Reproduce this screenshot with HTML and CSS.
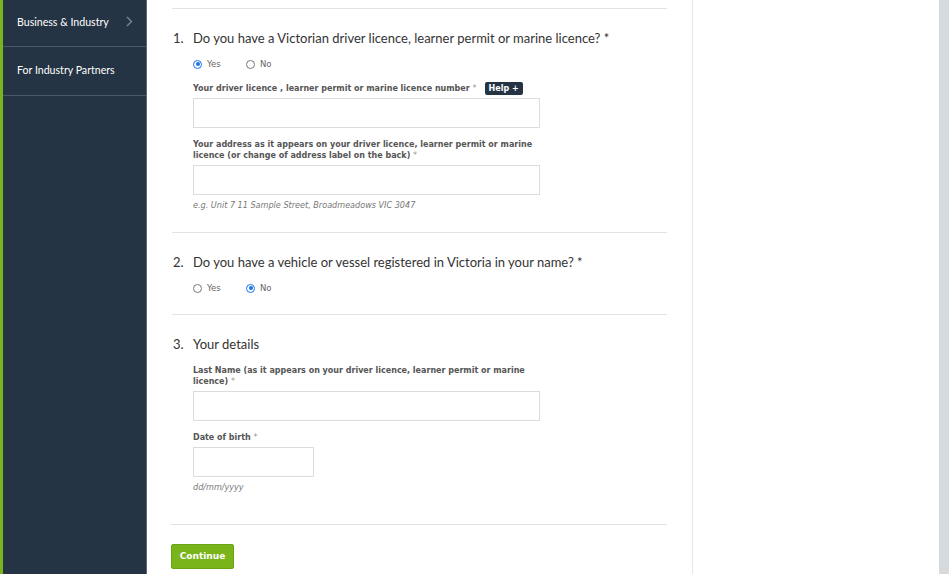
FILE: index.html
```html
<!DOCTYPE html>
<html>
<head>
<meta charset="utf-8">
<link rel="stylesheet" href="styles.css">
</head>
<body>
<div class="page">
  <div class="accent"></div>
  <nav class="sidebar">
    <a class="nav-item">Business &amp; Industry
      <svg class="chev" width="7" height="11" viewBox="0 0 7 11"><path d="M1 1l4.5 4.5L1 10" fill="none" stroke="#7d8895" stroke-width="1.3"/></svg>
    </a>
    <a class="nav-item">For Industry Partners</a>
  </nav>
  <main class="main">
    <div class="section first">
      <h2 class="q"><span class="num">1.</span>Do you have a Victorian driver licence, learner permit or marine licence? *</h2>
      <div class="body">
        <div class="radios">
          <label class="radio"><span class="dot on"></span>Yes</label>
          <label class="radio"><span class="dot"></span>No</label>
        </div>
        <div class="field">
          <div class="label">Your driver licence , learner permit or marine licence number <span class="req">*</span><span class="help">Help +</span></div>
          <div class="input wide"></div>
        </div>
        <div class="field">
          <div class="label">Your address as it appears on your driver licence, learner permit or marine licence (or change of address label on the back) <span class="req">*</span></div>
          <div class="input wide"></div>
          <div class="hint">e.g. Unit 7 11 Sample Street, Broadmeadows VIC 3047</div>
        </div>
      </div>
    </div>
    <div class="section second">
      <h2 class="q"><span class="num">2.</span>Do you have a vehicle or vessel registered in Victoria in your name? *</h2>
      <div class="body">
        <div class="radios">
          <label class="radio"><span class="dot"></span>Yes</label>
          <label class="radio"><span class="dot on"></span>No</label>
        </div>
      </div>
    </div>
    <div class="section last">
      <h2 class="q"><span class="num">3.</span>Your details</h2>
      <div class="body">
        <div class="field">
          <div class="label">Last Name (as it appears on your driver licence, learner permit or marine licence) <span class="req">*</span></div>
          <div class="input wide"></div>
        </div>
        <div class="field">
          <div class="label">Date of birth <span class="req">*</span></div>
          <div class="input short"></div>
          <div class="hint">dd/mm/yyyy</div>
        </div>
      </div>
    </div>
    <div class="actions">
      <button class="btn">Continue</button>
    </div>
  </main>
  <aside class="aside"></aside>
  <div class="scroll"></div>
</div>
</body>
</html>
```
FILE: styles.css
```css
html, body { margin: 0; padding: 0; }
body { background: #fff; font-family: "Lato", "Liberation Sans", sans-serif; }
.page { display: flex; height: 574px; overflow: hidden; }
.accent { width: 3px; background: #78b41a; flex: none; }
.sidebar { width: 143px; background: #253444; border-right: 1px solid #5c6875; flex: none; }
.nav-item { display: flex; align-items: center; justify-content: space-between; height: 47px; padding: 0 13px 3px 14px; box-sizing: border-box; border-bottom: 1px solid #4a5867; color: #fff; font-size: 10.6px; font-family: "Lato", sans-serif; }
.nav-item + .nav-item { height: 49px; padding-bottom: 2px; }
.chev { flex: none; }
.main { width: 546px; flex: none; border-right: 1px solid #e6e6e6; padding: 0 25px 0 25px; box-sizing: border-box; }
.section { border-top: 1px solid #e3e3e3; padding: 20px 0 20px; }
.section.first { margin-top: 8px; padding-bottom: 21px; }
.section.second { padding-bottom: 18px; }
.section.last { padding-bottom: 31px; }
.section.last .field:first-child { margin-top: 12px; }
.q { margin: 0; font-weight: 400; font-size: 13px; color: #333; line-height: 18px; display: flex; }
.num { width: 21px; flex: none; padding-left: 1px; box-sizing: border-box; }
.body { padding-left: 21px; }
.radios { display: flex; gap: 22px; margin-top: 9px; height: 16px; align-items: center; }
.radio { display: flex; align-items: center; font-family: "DejaVu Sans", Verdana, sans-serif; font-size: 8.5px; color: #666; width: 31px; }
.dot { width: 7px; height: 7px; border: 1px solid #767676; border-radius: 50%; margin-right: 5px; box-sizing: content-box; position: relative; }
.dot.on { border-color: #1a73e8; }
.dot.on::after { content: ""; position: absolute; left: 1.5px; top: 1.5px; width: 4px; height: 4px; border-radius: 50%; background: #1a73e8; }
.field { margin-top: 11px; }
.label { font-family: "DejaVu Sans", Verdana, sans-serif; font-weight: bold; font-size: 8px; color: #555; line-height: 11px; max-width: 346px; }
.req { color: #999; font-weight: normal; }
.help { display: inline-block; background: #253444; color: #fff; font-size: 8px; padding: 2px 4px; margin: -2px 0 -2px 8px; border-radius: 2px; vertical-align: middle; line-height: 9px; }
.input { border: 1px solid #dcdcdc; height: 28px; margin-top: 4px; }
.input.wide { width: 345px; }
.input.short { width: 119px; }
.hint { font-family: "DejaVu Sans", Verdana, sans-serif; font-style: italic; font-size: 8.1px; color: #777; margin-top: 5px; line-height: 11px; }
.actions { border-top: 1px solid #e3e3e3; padding-top: 18px; margin-left: -1px; }
.btn { background: #78b41a; color: #fff; border: 1px solid #6aa313; border-radius: 2px; font-family: "DejaVu Sans", Verdana, sans-serif; font-weight: bold; font-size: 9px; width: 63px; height: 25px; padding: 0; }
.aside { flex: 1; }
.scroll { width: 10px; background: #d7dadd; flex: none; }
```
